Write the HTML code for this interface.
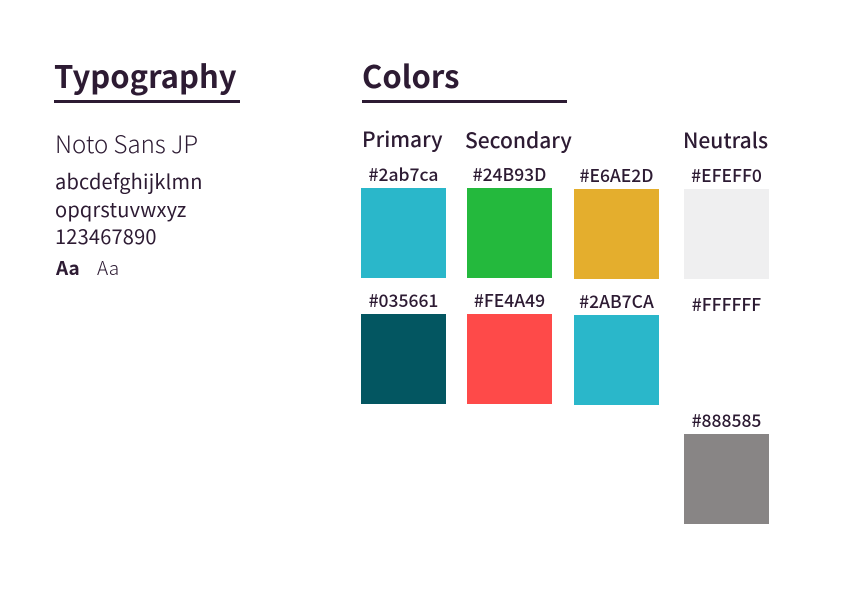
<!DOCTYPE html>
<html><head><style>
body{margin:0;width:850px;height:600px;background:#fff;position:relative;font-family:"Liberation Sans","Noto Sans CJK JP",sans-serif;color:#2d1b33;overflow:hidden}
.a{position:absolute;white-space:nowrap}
.h{font-family:"Noto Sans CJK JP","Liberation Sans",sans-serif;font-weight:700;font-size:31px;line-height:1}
.u{position:absolute;height:3px;background:#2d1b33}
.s{font-family:"Noto Sans CJK JP","Liberation Sans",sans-serif;font-weight:500;font-size:21px;line-height:1}
.l{position:absolute;width:85px;text-align:center;font-family:"Noto Sans CJK JP","Liberation Sans",sans-serif;font-weight:500;font-size:17.5px;line-height:1}
.b{position:absolute;width:85px;height:90px}
.t{font-family:"Noto Sans CJK JP","Liberation Sans",sans-serif;font-weight:400;line-height:1}
</style></head><body>
<div class="a h" style="left:54px;top:59px">Typography</div>
<div class="u" style="left:54px;top:100px;width:186px"></div>
<div class="a h" style="left:362px;top:59px">Colors</div>
<div class="u" style="left:362px;top:100px;width:205px"></div>

<div class="a t" style="left:55px;top:131px;font-size:24px;font-weight:300">Noto Sans JP</div>
<div class="a t" style="left:55px;top:171px;font-size:20px;font-weight:400;letter-spacing:0.2px">abcdefghijklmn</div>
<div class="a t" style="left:55px;top:199px;font-size:20px;font-weight:400;letter-spacing:0.2px">opqrstuvwxyz</div>
<div class="a t" style="left:55px;top:226px;font-size:20px;font-weight:400;letter-spacing:0.2px">123467890</div>
<div class="a" style="left:56px;top:258px;font-size:19px;font-weight:700;font-family:'Noto Sans CJK JP',sans-serif;line-height:1">Aa</div>
<div class="a t" style="left:97px;top:258px;font-size:19px;font-weight:300">Aa</div>

<div class="a s" style="left:362px;top:129px">Primary</div>
<div class="a s" style="left:465px;top:130px">Secondary</div>
<div class="a s" style="left:683px;top:130px">Neutrals</div>

<div class="l" style="left:361px;top:166px">#2ab7ca</div>
<div class="b" style="left:361px;top:188px;background:#2ab7ca"></div>
<div class="l" style="left:467px;top:166px">#24B93D</div>
<div class="b" style="left:467px;top:188px;background:#24b93d"></div>
<div class="l" style="left:574px;top:167px">#E6AE2D</div>
<div class="b" style="left:574px;top:189px;background:#e4ae2d"></div>
<div class="l" style="left:684px;top:167px">#EFEFF0</div>
<div class="b" style="left:684px;top:189px;background:#efeff0"></div>

<div class="l" style="left:361px;top:292px">#035661</div>
<div class="b" style="left:361px;top:314px;background:#035661"></div>
<div class="l" style="left:467px;top:292px">#FE4A49</div>
<div class="b" style="left:467px;top:314px;background:#fe4a49"></div>
<div class="l" style="left:574px;top:293px">#2AB7CA</div>
<div class="b" style="left:574px;top:315px;background:#2ab7ca"></div>
<div class="l" style="left:684px;top:296px">#FFFFFF</div>

<div class="l" style="left:684px;top:412px">#888585</div>
<div class="b" style="left:684px;top:434px;background:#888585"></div>
</body></html>
